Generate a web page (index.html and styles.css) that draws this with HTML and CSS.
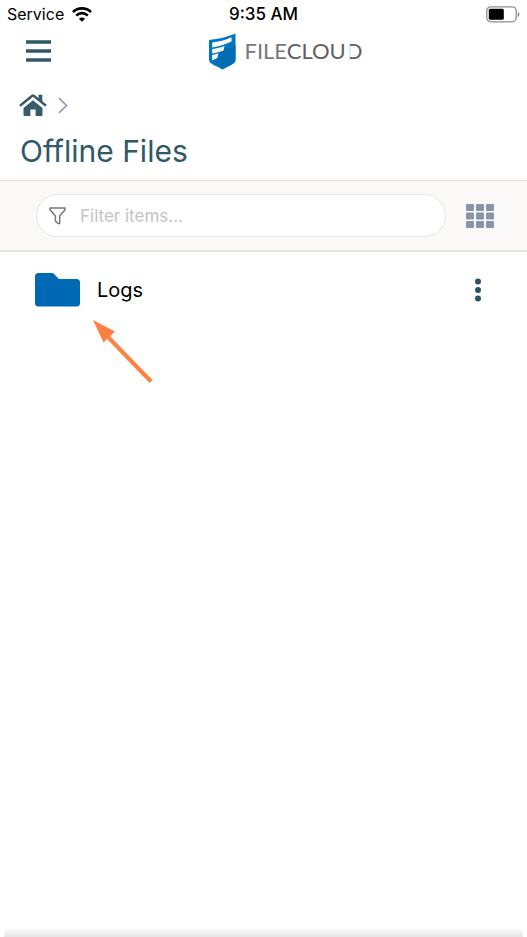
FILE: index.html
```html
<!DOCTYPE html>
<html lang="en">
<head>
<meta charset="utf-8">
<meta name="viewport" content="width=device-width, initial-scale=1">
<title>Offline Files</title>
<link rel="stylesheet" href="styles.css">
</head>
<body>
<div class="status">
  <div class="carrier">
    <span>Service</span>
    <svg width="20" height="15" viewBox="0 0 20 15" aria-hidden="true">
      <g fill="none" stroke="#000" stroke-width="2.7">
        <path d="M1 5.1C6 .2 14 .2 19 5.1"/>
        <path d="M4.2 8.6C7.5 5.4 12.500 5.400 15.800 8.600"/>
      </g>
      <path d="M10 14.800 6.900 11.700C8.600 10.200 11.400 10.200 13.100 11.700Z"/>
    </svg>
  </div>
  <time class="clock">9:35 AM</time>
  <svg class="battery" width="34" height="17" viewBox="0 0 34 17" aria-hidden="true">
    <rect x=".8" y=".8" width="29.400" height="15" rx="4" fill="none" stroke="#8e8e8e" stroke-width="1.300"/>
    <rect x="2.800" y="2.800" width="15" height="11" rx="1.500"/>
    <path d="M31.800 6v5c2-1 2-4 0-5Z" fill="#777"/>
  </svg>
</div>
<header class="header">
  <button class="icon-button" type="button" aria-label="Menu">
    <svg width="25" height="22" viewBox="0 0 25 22"><path d="M0 2h25M0 11h25M0 20h25" stroke="#315768" stroke-width="3.600"/></svg>
  </button>
  <a class="brand" href="#">
    <svg width="27" height="37" viewBox="0 0 27 37" aria-hidden="true">
      <path d="M0 7C10 6 18 4 26.500 .5V27C26.500 31 19 33 13.500 36.500C8 33 0 31 0 27Z" fill="#0078c1"/>
      <path d="M12 17 26.500 12V27C26.500 31 19 33 13.500 36.500L5 27Z" fill="#006db5"/>
      <path d="M3.200 9.400C10 8.800 16 7.200 22.500 4.200V8.600C16 11.500 10 13.500 3.200 14.500Z" fill="#fff"/>
      <path d="M3.200 16C8 15.400 12 14.400 15.500 13L14.500 17.500C11 18.800 7 19.800 3.200 20.500Z" fill="#fff"/>
      <path d="M3.200 22C5.500 21.600 7.500 21 9.500 20.300L8.300 25L3.200 27.500Z" fill="#fff"/>
    </svg>
    <span class="wordmark">FILE<b>CLOU<span class="open-d">D</span></b></span>
  </a>
</header>
<main>
  <nav class="crumbs" aria-label="Breadcrumb">
    <a href="#" aria-label="Home">
      <svg width="28" height="23" viewBox="0 0 28 23">
        <path d="M14 6.200 23.500 14V20.800Q23.500 22 22.300 22H16.600V15.500H11.400V22H5.700Q4.500 22 4.500 20.800V14Z" fill="#385b6a"/>
        <path d="M1 11.800 13 2Q14 1.200 15 2L27 11.800" fill="none" stroke="#385b6a" stroke-width="2.400"/>
        <path d="M19.500 .8H23.300V8L19.500 5Z" fill="#385b6a"/>
      </svg>
    </a>
    <svg width="10" height="17" viewBox="0 0 10 17" aria-hidden="true"><path d="M1 1 8.500 8.500 1 16" fill="none" stroke="#8b97ae" stroke-width="1.600"/></svg>
  </nav>
  <h1 class="title">Offline Files</h1>
  <div class="toolbar">
    <label class="filter">
      <svg width="17" height="18" viewBox="0 0 17 18" aria-hidden="true"><path d="M1 1H16V2.800L10.700 9V16.500H9L6.400 14V9L1 2.800Z" fill="none" stroke="#77777b" stroke-width="1.500" stroke-linejoin="round"/></svg>
      <input type="text" placeholder="Filter items..." aria-label="Filter items">
    </label>
    <button class="icon-button" type="button" aria-label="Grid view">
      <svg width="28" height="24" viewBox="0 0 28 24" fill="#8993aa">
        <rect width="8" height="7" rx="1"/><rect x="10" width="8" height="7" rx="1"/><rect x="20" width="8" height="7" rx="1"/>
        <rect y="8.500" width="8" height="7" rx="1"/><rect x="10" y="8.500" width="8" height="7" rx="1"/><rect x="20" y="8.500" width="8" height="7" rx="1"/>
        <rect y="17" width="8" height="7" rx="1"/><rect x="10" y="17" width="8" height="7" rx="1"/><rect x="20" y="17" width="8" height="7" rx="1"/>
      </svg>
    </button>
  </div>
  <ul class="files">
    <li class="file">
      <svg width="45" height="34" viewBox="0 0 45 34" aria-hidden="true"><path d="M3.500 0H18L24 6H41.500Q45 6 45 9.500V30Q45 33.500 41.500 33.500H3.500Q0 33.500 0 30V3.500Q0 0 3.500 0Z" fill="#0069b4"/></svg>
      <span class="name">Logs</span>
      <button class="icon-button" type="button" aria-label="More actions">
        <svg width="6" height="24" viewBox="0 0 6 24" fill="#2d5364"><circle cx="3" cy="3.500" r="3"/><circle cx="3" cy="12" r="3"/><circle cx="3" cy="20.500" r="3"/></svg>
      </button>
      <svg class="pointer" width="60" height="64" viewBox="0 0 60 64" aria-hidden="true"><path d="M14 16 58 61.500" stroke="#ff8040" stroke-width="4"/><path d="M0 0 22 11.500 10.500 22.500Z" fill="#ff8040"/></svg>
    </li>
  </ul>
</main>
<div class="sheet-edge"></div>
</body>
</html>
```
FILE: styles.css
```css
* {
  box-sizing: border-box;
}

body {
  margin: 0;
  min-height: 100vh;
  display: flex;
  flex-direction: column;
  overflow-x: hidden;
  background: #fff;
  color: #000;
  font-family: Inter, "Liberation Sans", sans-serif;
}

svg {
  display: block;
  flex: none;
}

.icon-button {
  display: block;
  padding: 0;
  border: 0;
  background: none;
}

.status,
.header {
  display: grid;
  grid-template-columns: 1fr auto 1fr;
  align-items: center;
}

.status {
  height: 28px;
  padding: 0 7px;
  font-size: 16px;
}

.carrier {
  display: flex;
  align-items: center;
  gap: 8px;
}

.clock {
  font-size: 17px;
  font-weight: 500;
}

.battery {
  justify-self: end;
}

.header {
  height: 46px;
  padding: 0 26px;
}

.brand {
  display: flex;
  align-items: center;
  gap: 8px;
  margin-left: 45px;
  color: #77787a;
  text-decoration: none;
}

.wordmark {
  font-family: Lato, sans-serif;
  font-size: 22px;
  font-weight: 400;
  line-height: 28px;
}

.wordmark b {
  color: #606163;
  font-weight: 400;
}

.open-d {
  display: inline-block;
  clip-path: inset(0 0 0 4px);
}

.crumbs {
  display: flex;
  align-items: center;
  gap: 11px;
  padding: 20px 19px 0;
}

.title {
  margin: 16px 20px 11px;
  color: #315768;
  font-size: 30px;
  font-weight: 400;
  line-height: 36px;
}

.toolbar {
  display: flex;
  align-items: center;
  gap: 20px;
  padding: 13px 33px 13px 36px;
  border-top: 1px solid #dcdcdc;
  border-bottom: 2px solid #e6e6e6;
  background: #faf9f8;
}

.filter {
  flex: 1;
  display: flex;
  align-items: center;
  gap: 14px;
  height: 43px;
  padding: 0 12px;
  border: 1px solid #e5e5e7;
  border-radius: 22px;
  background: #fff;
}

.filter input {
  flex: 1;
  min-width: 0;
  padding: 0;
  border: 0;
  outline: 0;
  background: none;
  font: 17px Inter, sans-serif;
}

.filter input::placeholder {
  color: #c4c4c6;
}

.files {
  margin: 0;
  padding: 0;
  list-style: none;
}

.file {
  position: relative;
  display: flex;
  align-items: center;
  gap: 17px;
  height: 76px;
  padding: 0 46px 0 35px;
}

.name {
  flex: 1;
  font-size: 20px;
}

.pointer {
  position: absolute;
  left: 93px;
  top: 68px;
}

.sheet-edge {
  height: 10px;
  margin: auto 4px 0;
  border-radius: 8px 8px 0 0;
  background: linear-gradient(#fff, #e6e6e6);
}
```
